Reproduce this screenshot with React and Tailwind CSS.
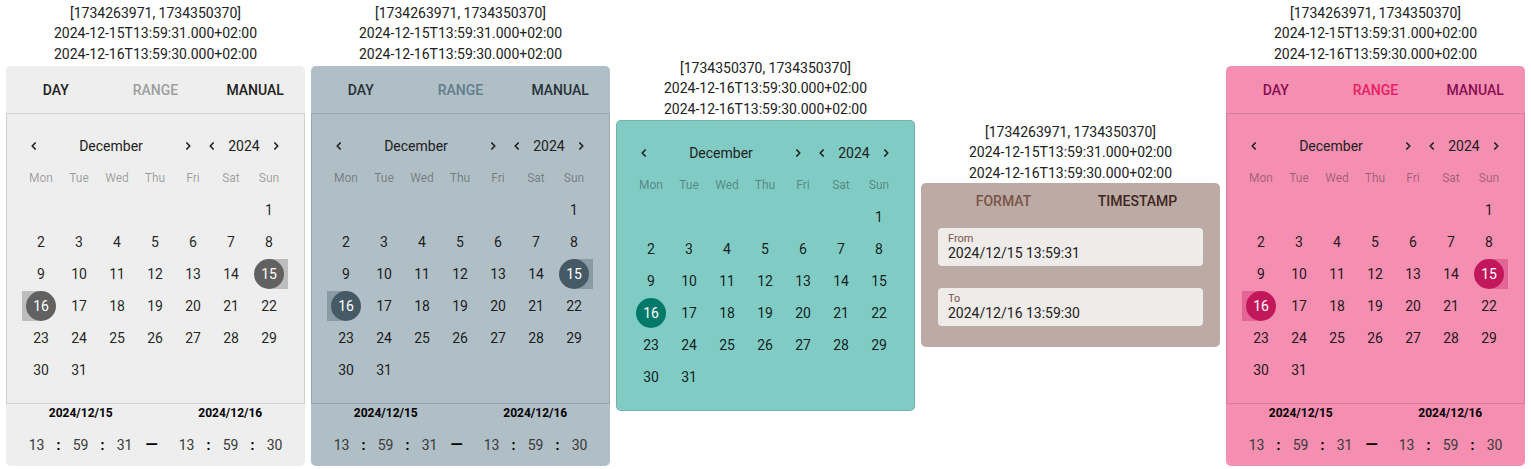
const themes = {
  grey: {
    bg: 'bg-[#eeeeee]',
    tab: 'text-[#212121]',
    tabActive: 'text-[#9e9e9e]',
    circle: 'bg-[#616161]',
    range: 'bg-[#bdbdbd]',
  },
  bluegrey: {
    bg: 'bg-[#b0bec5]',
    tab: 'text-[#263238]',
    tabActive: 'text-[#607d8b]',
    circle: 'bg-[#455a64]',
    range: 'bg-[#8a9ba3]',
  },
  teal: {
    bg: 'bg-[#80cbc4]',
    circle: 'bg-[#00796b]',
    range: 'bg-[#5aa9a0]',
  },
  pink: {
    bg: 'bg-[#f48fb1]',
    tab: 'text-[#880e4f]',
    tabActive: 'text-[#e91e63]',
    circle: 'bg-[#c2185b]',
    range: 'bg-[#e26593]',
  },
}

const weekdays = ['Mon', 'Tue', 'Wed', 'Thu', 'Fri', 'Sat', 'Sun']
const cells = [...Array(6).fill(null), ...Array.from({ length: 31 }, (_, i) => i + 1)]

function Chevron({ dir }) {
  return (
    <svg width="8" height="10" viewBox="0 0 8 10" fill="none">
      <path
        d={dir === 'left' ? 'M5.2 2 2.2 5l3 3' : 'M2.8 2l3 3-3 3'}
        stroke="currentColor"
        strokeWidth="1.7"
        strokeLinecap="round"
        strokeLinejoin="round"
      />
    </svg>
  )
}

function Title({ lines }) {
  return (
    <div className="text-center text-sm leading-[20.5px] text-[#212121]">
      {lines.map((l) => (
        <div key={l}>{l}</div>
      ))}
    </div>
  )
}

function Calendar({ t, from, to, className = '' }) {
  return (
    <div className={`border border-black/[0.12] px-[15px] pt-[16px] pb-[17px] ${className}`}>
      <div className="flex h-8 w-[266px] items-center text-sm text-[#212121]">
        <div className="flex w-[178px] items-center">
          <span className="flex w-6 justify-center"><Chevron dir="left" /></span>
          <span className="flex-1 text-center">December</span>
          <span className="flex w-6 justify-center"><Chevron dir="right" /></span>
        </div>
        <div className="flex w-[88px] items-center">
          <span className="flex w-6 justify-center"><Chevron dir="left" /></span>
          <span className="flex-1 text-center">2024</span>
          <span className="flex w-6 justify-center"><Chevron dir="right" /></span>
        </div>
      </div>
      <div className="grid h-8 grid-cols-[repeat(7,38px)] items-center text-center text-xs text-black/35">
        {weekdays.map((d) => (
          <span key={d}>{d}</span>
        ))}
      </div>
      <div className="grid grid-cols-[repeat(7,38px)] auto-rows-[32px] text-sm text-black/[0.87]">
        {cells.map((d, i) => {
          if (!d) return <span key={'e' + i} />
          const picked = d === from || d === to
          const ranged = from !== to
          return (
            <div key={d} className="relative flex items-center justify-center">
              {ranged && d === from && (
                <span className={`absolute top-1/2 right-0 left-1/2 h-[30px] -translate-y-1/2 ${t.range}`} />
              )}
              {ranged && d === to && (
                <span className={`absolute top-1/2 right-1/2 left-0 h-[30px] -translate-y-1/2 ${t.range}`} />
              )}
              {picked ? (
                <span className={`relative flex h-[30px] w-[30px] items-center justify-center rounded-full text-white ${t.circle}`}>
                  {d}
                </span>
              ) : (
                <span>{d}</span>
              )}
            </div>
          )
        })}
      </div>
    </div>
  )
}

function TimeGroup({ h, m, s }) {
  const items = [h, ':', m, ':', s]
  return (
    <div className="flex w-[110px]">
      {items.map((v, i) => (
        <span
          key={i}
          className={`w-[22px] text-center ${v === ':' ? 'font-bold text-black' : 'text-[#3a3a3a]'}`}
        >
          {v}
        </span>
      ))}
    </div>
  )
}

function RangePanel({ t }) {
  return (
    <div className={`mt-[2px] w-[299px] overflow-hidden rounded-[5px] ${t.bg}`}>
      <div className="grid h-[47px] grid-cols-3 items-center text-center text-sm font-medium">
        <span className={t.tab}>DAY</span>
        <span className={t.tabActive}>RANGE</span>
        <span className={t.tab}>MANUAL</span>
      </div>
      <Calendar t={t} from={15} to={16} />
      <div className="grid h-[18px] grid-cols-2 items-center text-center text-xs font-bold text-black">
        <span>2024/12/15</span>
        <span>2024/12/16</span>
      </div>
      <div className="mt-2 mb-[6px] flex h-[30px] items-center justify-center text-sm">
        <TimeGroup h="13" m="59" s="31" />
        <span className="w-10 pr-2 text-center text-base font-bold text-black">—</span>
        <TimeGroup h="13" m="59" s="30" />
      </div>
    </div>
  )
}

const rangeLines = ['[1734263971, 1734350370]', '2024-12-15T13:59:31.000+02:00', '2024-12-16T13:59:30.000+02:00']
const dayLines = ['[1734350370, 1734350370]', '2024-12-16T13:59:30.000+02:00', '2024-12-16T13:59:30.000+02:00']

function Field({ label, value }) {
  return (
    <div className="h-[38px] rounded bg-[#efebe9] pt-[4px] pl-[10px]">
      <div className="text-[11px] leading-[13px] text-[#795548]">{label}</div>
      <div className="text-sm leading-4 text-[#212121]">{value}</div>
    </div>
  )
}

export default function App() {
  return (
    <div className="flex h-[469px] items-center gap-[6px] bg-white px-[6px] font-['Roboto',sans-serif]">
      <div className="flex w-[299px] flex-col items-center">
        <Title lines={rangeLines} />
        <RangePanel t={themes.grey} />
      </div>
      <div className="flex w-[299px] flex-col items-center">
        <Title lines={rangeLines} />
        <RangePanel t={themes.bluegrey} />
      </div>
      <div className="flex w-[299px] flex-col items-center">
        <Title lines={dayLines} />
        <Calendar t={themes.teal} from={16} to={16} className={`mt-[1px] w-[299px] rounded-[5px] ${themes.teal.bg}`} />
      </div>
      <div className="flex w-[299px] flex-col items-center">
        <Title lines={rangeLines} />
        <div className="w-[299px] rounded-[5px] bg-[#bcaaa4]">
          <div className="flex h-9 items-center justify-center text-sm font-medium">
            <span className="w-[134px] text-center text-[#795548]">FORMAT</span>
            <span className="w-[134px] text-center text-[#3e2723]">TIMESTAMP</span>
          </div>
          <div className="flex flex-col gap-[22px] px-[17px] pt-[9px] pb-[21px]">
            <Field label="From" value="2024/12/15 13:59:31" />
            <Field label="To" value="2024/12/16 13:59:30" />
          </div>
        </div>
      </div>
      <div className="flex w-[299px] flex-col items-center">
        <Title lines={rangeLines} />
        <RangePanel t={themes.pink} />
      </div>
    </div>
  )
}
